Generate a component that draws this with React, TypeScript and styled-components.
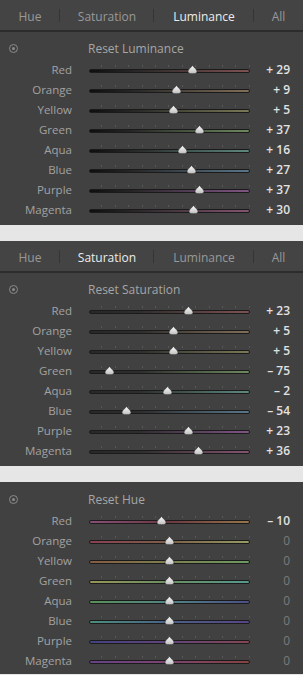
import React from 'react';
import styled, { createGlobalStyle } from 'styled-components';

const GlobalStyle = createGlobalStyle`
  html, body {
    margin: 0;
    padding: 0;
    background: #e6e6e6;
  }
  body {
    font-family: 'Open Sans', 'DejaVu Sans', sans-serif;
  }
`;

type Mode = 'hue' | 'sat' | 'lum';

const Page = styled.div`
  width: 303px;
  display: flex;
  flex-direction: column;
  gap: 16px;
`;

const Panel = styled.section`
  background: #414141;
`;

const TabBar = styled.div`
  display: grid;
  grid-template-columns: 60px 94px 100px 1fr;
  height: 30px;
  background: #444444;
  border-bottom: 2px solid #2c2c2c;
`;

const Tab = styled.div<{ $active?: boolean; $divider?: boolean }>`
  position: relative;
  display: flex;
  align-items: center;
  justify-content: center;
  font-size: 12px;
  padding-top: 2px;
  color: ${p => (p.$active ? '#ececec' : '#999999')};

  &::after {
    content: '';
    display: ${p => (p.$divider ? 'block' : 'none')};
    position: absolute;
    right: 0;
    top: 9px;
    height: 13px;
    width: 1px;
    background: #353535;
  }
`;

const Body = styled.div<{ $top: number; $bottom: number }>`
  padding: ${p => p.$top}px 0 ${p => p.$bottom}px;
`;

const ResetRow = styled.div`
  display: grid;
  grid-template-columns: 88px 1fr;
  align-items: center;
  height: 22px;
  margin-bottom: 1px;
`;

const ResetIcon = styled.span`
  margin-left: 9px;
  width: 7px;
  height: 7px;
  border: 1px solid #8a8a8a;
  border-radius: 50%;
  display: flex;
  align-items: center;
  justify-content: center;

  &::after {
    content: '';
    width: 3px;
    height: 3px;
    border-radius: 50%;
    background: #8a8a8a;
  }
`;

const ResetLabel = styled.span`
  font-size: 12px;
  color: #a6a6a6;
`;

const Row = styled.div`
  display: grid;
  grid-template-columns: 80px 170px 40px;
  align-items: center;
  height: 20px;
`;

const Label = styled.span`
  font-size: 11.5px;
  line-height: 20px;
  color: #a2a2a2;
  text-align: right;
  padding-right: 8px;
`;

const TrackArea = styled.div`
  position: relative;
  height: 20px;
  margin-left: 9px;
`;

const Ticks = styled.div`
  position: absolute;
  left: 0;
  right: 0;
  top: 5px;
  height: 2px;
  background: repeating-linear-gradient(
    to right,
    transparent 0,
    transparent 12.4px,
    #575757 12.4px,
    #575757 13.4px
  );
`;

const Track = styled.div`
  position: absolute;
  left: 0;
  right: 0;
  top: 9px;
  height: 4px;
  border-radius: 3px;
  box-sizing: border-box;
  border: 1px solid #1f1f1f;
  filter: saturate(0.7) brightness(0.88);
`;

const Thumb = styled.div`
  position: absolute;
  top: 5px;
  width: 11px;
  height: 9px;
  margin-left: -5.5px;

  svg {
    display: block;
  }
`;

const Value = styled.span<{ $zero: boolean }>`
  font-size: 12px;
  line-height: 20px;
  text-align: right;
  color: ${p => (p.$zero ? '#7a7a7a' : '#e2e2e2')};
  font-weight: ${p => (p.$zero ? 400 : 600)};
  white-space: pre;
`;

const names = ['Red', 'Orange', 'Yellow', 'Green', 'Aqua', 'Blue', 'Purple', 'Magenta'];

const lumColors = ['#a05858', '#9a7c58', '#8c8a52', '#74a05a', '#5aa090', '#5a88a8', '#a05aa8', '#a85a88'];

const hueStops: [string, string, string][] = [
  ['#b05095', '#8e3a48', '#b6843e'],
  ['#b84060', '#9a6a44', '#a8b456'],
  ['#a8643c', '#8e9444', '#6cb45a'],
  ['#acac48', '#6aa860', '#48b4a4'],
  ['#52ac52', '#4a9a9c', '#5058b4'],
  ['#3caa8c', '#4a6eac', '#6a48b4'],
  ['#4848b0', '#7a48a0', '#b0485c'],
  ['#8044b4', '#a0468a', '#b04444'],
];

const trackBg = (mode: Mode, i: number) => {
  if (mode === 'lum') return `linear-gradient(to right, #111111 0%, #2a2a2a 25%, ${lumColors[i]} 100%)`;
  if (mode === 'sat') return `linear-gradient(to right, #2e2e2e 0%, #333333 30%, ${lumColors[i]} 100%)`;
  const [a, b, c] = hueStops[i];
  return `linear-gradient(to right, ${a}, ${b} 50%, ${c})`;
};

const fmt = (v: number) => (v === 0 ? '0' : `${v > 0 ? '+' : '–'} ${Math.abs(v)}`);

const ThumbShape = () => (
  <svg viewBox="0 0 11 9" width="11" height="9">
    <defs>
      <linearGradient id="tg" x1="0" y1="0" x2="0" y2="1">
        <stop offset="0" stopColor="#ffffff" />
        <stop offset="1" stopColor="#bdbdbd" />
      </linearGradient>
    </defs>
    <path d="M5.5 0.3 C6.4 2.2 10 4.4 10 6.4 C10 8.1 8.6 8.7 5.5 8.7 C2.4 8.7 1 8.1 1 6.4 C1 4.4 4.6 2.2 5.5 0.3 Z" fill="url(#tg)" stroke="#2a2a2a" strokeWidth="0.6" />
  </svg>
);

const SliderRow: React.FC<{ mode: Mode; index: number; value: number }> = ({ mode, index, value }) => (
  <Row>
    <Label>{names[index]}</Label>
    <TrackArea>
      <Ticks />
      <Track style={{ background: trackBg(mode, index) }} />
      <Thumb style={{ left: `${50 + value / 2}%` }}>
        <ThumbShape />
      </Thumb>
    </TrackArea>
    <Value $zero={value === 0}>{fmt(value)}</Value>
  </Row>
);

const tabs = ['Hue', 'Saturation', 'Luminance', 'All'];

const AdjustPanel: React.FC<{ mode: Mode; title: string; values: number[]; active?: string; showTabs: boolean }> = ({
  mode,
  title,
  values,
  active,
  showTabs,
}) => (
  <Panel>
    {showTabs && (
      <TabBar>
        {tabs.map((t, i) => (
          <Tab key={t} $active={t === active} $divider={i < tabs.length - 1}>
            {t}
          </Tab>
        ))}
      </TabBar>
    )}
    <Body $top={showTabs ? 5 : 6} $bottom={showTabs ? 5 : 3}>
      <ResetRow>
        <ResetIcon />
        <ResetLabel>{title}</ResetLabel>
      </ResetRow>
      {values.map((v, i) => (
        <SliderRow key={i} mode={mode} index={i} value={v} />
      ))}
    </Body>
  </Panel>
);

export default function App() {
  return (
    <>
      <GlobalStyle />
      <Page>
        <AdjustPanel mode="lum" title="Reset Luminance" active="Luminance" showTabs values={[29, 9, 5, 37, 16, 27, 37, 30]} />
        <AdjustPanel mode="sat" title="Reset Saturation" active="Saturation" showTabs values={[23, 5, 5, -75, -2, -54, 23, 36]} />
        <AdjustPanel mode="hue" title="Reset Hue" showTabs={false} values={[-10, 0, 0, 0, 0, 0, 0, 0]} />
      </Page>
    </>
  );
}
